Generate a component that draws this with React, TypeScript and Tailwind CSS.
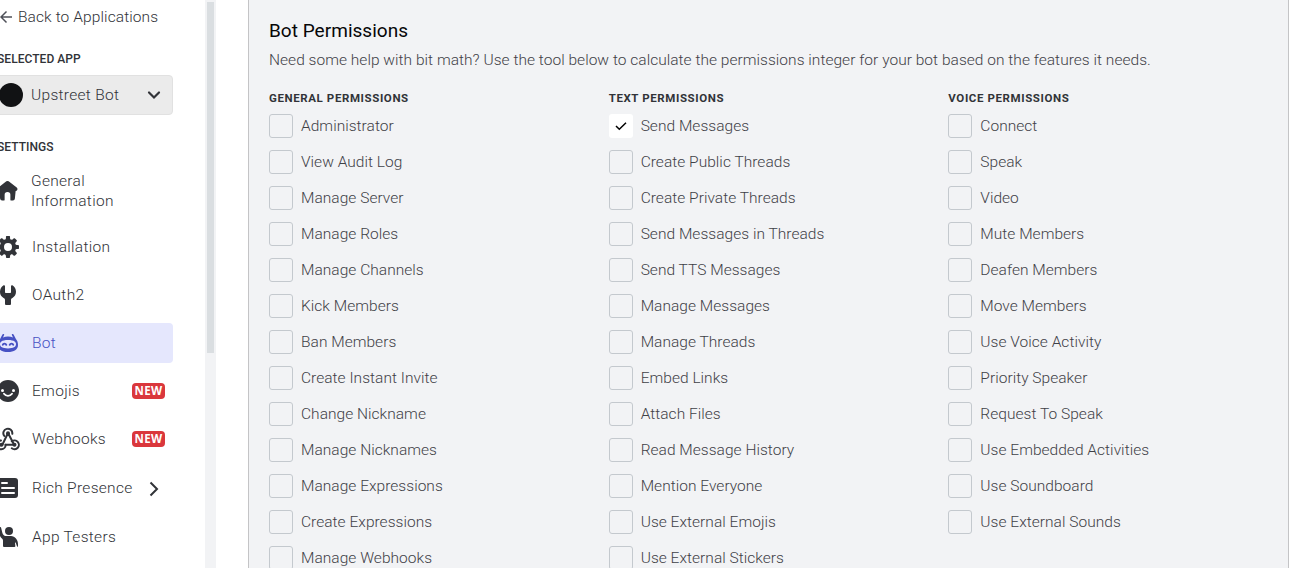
import type { ReactNode } from "react";

const general = ["Administrator", "View Audit Log", "Manage Server", "Manage Roles", "Manage Channels", "Kick Members", "Ban Members", "Create Instant Invite", "Change Nickname", "Manage Nicknames", "Manage Expressions", "Create Expressions", "Manage Webhooks"];
const text = ["Send Messages", "Create Public Threads", "Create Private Threads", "Send Messages in Threads", "Send TTS Messages", "Manage Messages", "Manage Threads", "Embed Links", "Attach Files", "Read Message History", "Mention Everyone", "Use External Emojis", "Use External Stickers"];
const voice = ["Connect", "Speak", "Video", "Mute Members", "Deafen Members", "Move Members", "Use Voice Activity", "Priority Speaker", "Request To Speak", "Use Embedded Activities", "Use Soundboard", "Use External Sounds"];

function Icon({ children }: { children: ReactNode }) {
  return (
    <svg viewBox="0 0 24 24" fill="currentColor" className="h-6 w-6 shrink-0">
      {children}
    </svg>
  );
}

const HomeIcon = () => (
  <svg viewBox="0 0 24 24" fill="currentColor" className="h-6 w-[23px] shrink-0">
    <path d="m2.4 8.4 8.38-6.46a2 2 0 0 1 2.44 0l8.39 6.45a2 2 0 0 1-.79 3.54l-.32.07-.82 8.2a2 2 0 0 1-1.99 1.8H16a1 1 0 0 1-1-1v-5a3 3 0 0 0-6 0v5a1 1 0 0 1-1 1H6.31a2 2 0 0 1-1.99-1.8L3.5 12l-.32-.07a2 2 0 0 1-.79-3.54Z" />
  </svg>
);

const GearIcon = () => (
  <Icon>
    <path
      fillRule="evenodd"
      d="M10.56 1.1c-.46.05-.7.53-.64.98.18 1.16-.19 2.2-.98 2.53-.8.33-1.79-.15-2.49-1.1-.27-.36-.78-.52-1.14-.24-.77.59-1.45 1.27-2.04 2.04-.28.36-.12.87.24 1.14.96.7 1.43 1.7 1.1 2.49-.33.8-1.37 1.16-2.53.98-.45-.07-.93.18-.99.64a11.1 11.1 0 0 0 0 2.88c.06.46.54.7.99.64 1.16-.18 2.2.19 2.53.98.33.8-.14 1.79-1.1 2.49-.36.27-.52.78-.24 1.14.59.77 1.27 1.45 2.04 2.04.36.28.87.12 1.14-.24.7-.95 1.7-1.43 2.49-1.1.8.33 1.16 1.37.98 2.53-.07.45.18.93.64.99a11.1 11.1 0 0 0 2.88 0c.46-.06.7-.54.64-.99-.18-1.16.19-2.2.98-2.53.8-.33 1.79.14 2.49 1.1.27.36.78.52 1.14.24.77-.59 1.45-1.27 2.04-2.04.28-.36.12-.87-.24-1.14-.96-.7-1.43-1.7-1.1-2.49.33-.8 1.37-1.16 2.53-.98.45.07.93-.18.99-.64a11.1 11.1 0 0 0 0-2.88c-.06-.46-.54-.7-.99-.64-1.16.18-2.2-.19-2.53-.98-.33-.8.14-1.79 1.1-2.49.36-.27.52-.78.24-1.14a11.07 11.07 0 0 0-2.04-2.04c-.36-.28-.87-.12-1.14.24-.7.96-1.7 1.43-2.49 1.1-.8-.33-1.16-1.37-.98-2.53.07-.45-.18-.93-.64-.99a11.1 11.1 0 0 0-2.88 0ZM16 12a4 4 0 1 1-8 0 4 4 0 0 1 8 0Z"
    />
  </Icon>
);

const WrenchIcon = () => (
  <Icon>
    <path d="M7.6 2.3c.7-.3 1.4.1 1.4.8V9c0 .6.4 1 1 1h4c.6 0 1-.4 1-1V3.1c0-.7.7-1.1 1.4-.8A8 8 0 0 1 20 8.8c0 2.7-1.4 5-3.6 6.2-.8.4-1.4 1-1.4 1.8V21a1 1 0 0 1-1 1h-4a1 1 0 0 1-1-1v-4.2c0-.8-.6-1.4-1.4-1.8A7 7 0 0 1 4 8.8a8 8 0 0 1 3.6-6.5Z" />
  </Icon>
);

const BotIcon = () => (
  <Icon>
    <path d="M7.8 3.1c.4.2.5.6.3 1L7 6.4c1.4-.6 3.100-.9 5-.9s3.600.3 5 .9l-1.100-2.300c-.2-.4-.1-.8.3-1 .5-.3 1.100-.1 1.400.4l2.300 4.500c1.300 1.400 2.100 3.500 2.100 6 0 4.800-4 7-10 7s-10-2.200-10-7c0-2.500.8-4.600 2.100-6l2.300-4.500c.3-.5.9-.7 1.400-.4Z" />
    <path fill="#e5e7fd" d="M12 9c-3.100 0-5.400.6-6.600 1.400-1 .6-1.400 1.500-1.400 2.700 0 2.900 2.600 4.400 8 4.400s8-1.500 8-4.400c0-1.200-.5-2.100-1.400-2.700C17.400 9.600 15.100 9 12 9Z" />
    <path fill="none" stroke="currentColor" strokeWidth="1.9" strokeLinecap="round" d="M6.800 13.800c.4-1.600 2.900-1.600 3.500 0M13.700 13.800c.6-1.600 3.100-1.600 3.500 0" />
  </Icon>
);

const EmojiIcon = () => (
  <Icon>
    <circle cx="12" cy="12" r="11" />
    <circle cx="6.5" cy="11.5" r="1.5" fill="#fff" />
    <circle cx="17.5" cy="11.5" r="1.5" fill="#fff" />
    <path fill="none" stroke="#fff" strokeWidth="1.9" strokeLinecap="round" d="M8 14.8c2 2.700 6 2.700 8 0" />
  </Icon>
);

const WebhookIcon = () => (
  <Icon>
    <g fill="none" stroke="currentColor" strokeWidth="2" strokeLinecap="round">
      <path d="M12 6 6.500 17.500M12 6l6 11.500M18.500 17.800H9.500" />
      <path d="M8.300 9A4.500 4.500 0 1 1 16.300 6.800M15.800 14.300a4.400 4.400 0 1 1 0 7M5 13.500a4.400 4.400 0 1 0 4.600 4.300" />
    </g>
    <circle cx="12" cy="6.2" r="2" />
    <circle cx="18.5" cy="17.8" r="2" />
    <circle cx="5.5" cy="17.8" r="2" />
  </Icon>
);

const ListIcon = () => (
  <Icon>
    <rect x="2" y="2" width="20" height="20" rx="3" />
    <path stroke="#fff" strokeWidth="2" strokeLinecap="round" d="M6 7h5M6 12h12M6 17h12" />
  </Icon>
);

const TesterIcon = () => (
  <Icon>
    <circle cx="13" cy="6" r="4" />
    <path d="M3.2 2.500a1 1 0 0 1 1.900.3l1.300 5.100c.5 1.900 2 3.100 4 3.100H15c4 0 7 3.700 7 8.300v1.900c0 .5-.7.7-.9.2l-1.400-3.600c-.2-.4-.8-.3-.7.2l.3 2.800A1 1 0 0 1 18.300 22H8a1 1 0 0 1-1-1v-5.500c0-.7-.3-1.300-.8-1.800A9 9 0 0 1 3 8Z" />
  </Icon>
);

function NewBadge() {
  return (
    <span className="mr-2 ml-auto flex h-4 w-[33px] items-center justify-center rounded-[4px] bg-[#da373c] font-['Noto_Sans'] text-[11.5px] font-bold text-white">
      NEW
    </span>
  );
}

function NavItem({ icon, label, active, trailing, size = "h-10" }: { icon: ReactNode; label: ReactNode; active?: boolean; trailing?: ReactNode; size?: string }) {
  return (
    <div className={`flex items-center rounded-[4px] pl-2 ${size} ${active ? "bg-[#e5e7fd] text-[#4752c4]" : "text-[#313338]"}`}>
      {icon}
      <span className="ml-3 leading-5">{label}</span>
      {trailing}
    </div>
  );
}

function PermissionColumn({ title, items, checked }: { title: string; items: string[]; checked?: string }) {
  return (
    <section className="min-w-0">
      <h3 className="h-4 text-[11.5px] leading-4 font-bold tracking-[0.6px] whitespace-nowrap text-[#313338]">{title}</h3>
      <div className="mt-2 flex flex-col gap-3">
        {items.map((item) => (
          <label key={item} className="flex h-6 items-center gap-2 whitespace-nowrap">
            <span className={`flex h-6 w-6 shrink-0 items-center justify-center rounded-[3px] ${item === checked ? "bg-white" : "border border-[#c4c9ce]"}`}>
              {item === checked && (
                <svg viewBox="0 0 24 24" className="h-6 w-6" fill="none" stroke="#000" strokeWidth="1.5">
                  <path d="m7 12 3.300 3.300L17 8.700" />
                </svg>
              )}
            </span>
            <span className="pt-px">{item}</span>
          </label>
        ))}
      </div>
    </section>
  );
}

export default function App() {
  return (
    <div className="flex h-[568px] w-[1308px] overflow-hidden bg-white font-['Roboto','Liberation_Sans',sans-serif] text-[15.5px] font-light tracking-[0.03px] text-[#313338]">
      <aside className="w-[205px] shrink-0 overflow-hidden tracking-[0.3px]">
        <div className="-ml-3 flex w-[185px] flex-col">
          <div className="flex h-[34px] items-center pl-3 whitespace-nowrap">
            <svg viewBox="0 0 14 14" className="h-3.5 w-3.5 shrink-0" fill="none" stroke="#4e5058" strokeWidth="1.5">
              <path d="M12 7H1M6.5 1.5 1 7l5.5 5.5" />
            </svg>
            <span className="ml-1 pt-px tracking-[0.1px]">Back to Applications</span>
          </div>
          <h2 className="mt-[17px] h-4 pl-[9px] text-[12px] leading-4 font-medium tracking-[0.05px]">SELECTED APP</h2>
          <div className="mt-2 flex h-10 items-center rounded-[4px] border border-[#e1e1e1] bg-[#ebebeb] pr-[11px] pl-[10px]">
            <span className="h-6 w-6 shrink-0 rounded-full bg-[#111214]" />
            <span className="ml-2 pt-px whitespace-nowrap">Upstreet Bot</span>
            <svg viewBox="0 0 14 14" className="ml-auto h-3.5 w-3.5" fill="none" stroke="currentColor" strokeWidth="2.2" strokeLinecap="round">
              <path d="m2 4.5 5 5 5-5" />
            </svg>
          </div>
          <h2 className="mt-6 h-4 pl-[9px] text-[12px] leading-4 font-medium tracking-[0.05px]">SETTINGS</h2>
          <nav className="mt-2 flex flex-col gap-2">
            <NavItem icon={<HomeIcon />} label={<>General<br />Information</>} size="h-14" />
            <NavItem icon={<GearIcon />} label="Installation" />
            <NavItem icon={<WrenchIcon />} label="OAuth2" />
            <NavItem icon={<BotIcon />} label="Bot" active />
            <NavItem icon={<EmojiIcon />} label="Emojis" trailing={<NewBadge />} />
            <NavItem icon={<WebhookIcon />} label="Webhooks" trailing={<NewBadge />} />
            <NavItem
              icon={<ListIcon />}
              label="Rich Presence"
              size="h-[42px]"
              trailing={
                <svg viewBox="0 0 10 16" className="mt-0.5 mr-3.5 ml-auto h-4 w-[10px]" fill="none" stroke="currentColor" strokeWidth="2">
                  <path d="m1.5 1.5 6.5 6.5-6.5 6.5" />
                </svg>
              }
            />
            <NavItem icon={<TesterIcon />} label="App Testers" />
          </nav>
        </div>
      </aside>
      <div className="flex w-[11px] shrink-0 justify-center bg-[#f2f3f5] pt-0.5">
        <div className="h-[351px] w-[7px] bg-[#dadee1]" />
      </div>
      <main className="ml-8 w-[1041px] shrink-0 border-x border-[#c4c4c6] bg-[#f2f3f5] px-5 pt-[21px] text-[#3f4147]">
        <h1 className="h-5 text-[19px] leading-5 font-normal text-[#060607]">Bot Permissions</h1>
        <p className="mt-[9px] h-5 leading-5 whitespace-nowrap">
          Need some help with bit math? Use the tool below to calculate the permissions integer for your bot based on the features it needs.
        </p>
        <div className="mt-5 grid grid-cols-3 gap-x-5">
          <PermissionColumn title="GENERAL PERMISSIONS" items={general} />
          <PermissionColumn title="TEXT PERMISSIONS" items={text} checked="Send Messages" />
          <PermissionColumn title="VOICE PERMISSIONS" items={voice} />
        </div>
      </main>
    </div>
  );
}
